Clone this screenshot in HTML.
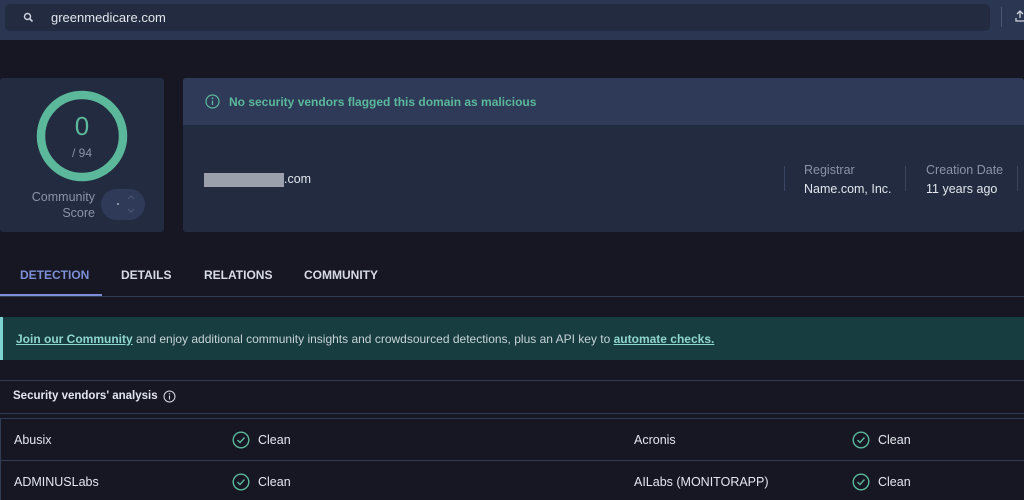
<!DOCTYPE html>
<html><head><meta charset="utf-8"><style>
*{margin:0;padding:0;box-sizing:border-box}
body{width:1024px;height:500px;overflow:hidden;background:#161723;font-family:"Liberation Sans",sans-serif;color:#e3e6ee;position:relative}
.a{position:absolute}
</style></head><body>
<div class="a" style="left:0;top:0;width:1024px;height:40px;background:#2b3652"></div>
<div class="a" style="left:5px;top:4px;width:985px;height:27px;background:#222b3f;border-radius:5px"></div>
<svg class="a" style="left:23px;top:12px" width="11" height="11" viewBox="0 0 11 11"><circle cx="4.5" cy="4.5" r="3" fill="none" stroke="#d0d4de" stroke-width="1.4"/><path d="M6.7 6.7L9.5 9.5" stroke="#d0d4de" stroke-width="1.6"/></svg>
<div class="a" style="left:51px;top:10px;font-size:13px;color:#e3e6ee">greenmedicare.com</div>
<div class="a" style="left:1001px;top:7px;width:1px;height:20px;background:#4a5570"></div>
<svg class="a" style="left:1015px;top:10px" width="10" height="12"><path d="M5 1V8M2 4L5 1L8 4M1 8V11H9" fill="none" stroke="#cfd3dd" stroke-width="1.3"/></svg>

<div class="a" style="left:0;top:78px;width:164px;height:154px;background:#222b40;border-radius:3px"></div>
<svg class="a" style="left:36px;top:90px" width="92" height="92"><circle cx="46" cy="46" r="41" fill="none" stroke="#5bb89b" stroke-width="8.5"/></svg>
<div class="a" style="left:0;top:111px;width:164px;text-align:center;font-size:26px;color:#5bb89b">0</div>
<div class="a" style="left:0;top:146px;width:164px;text-align:center;font-size:12px;color:#8a93a8">/ 94</div>
<div class="a" style="left:20px;top:189px;width:75px;text-align:right;font-size:12.5px;line-height:16px;color:#8a93a8">Community<br>Score</div>
<div class="a" style="left:101px;top:189px;width:44px;height:31px;border-radius:16px;background:#2e3a58"></div>
<div class="a" style="left:117px;top:203px;width:2px;height:2px;background:#8a93a8"></div>
<svg class="a" style="left:127px;top:193px" width="8" height="22"><path d="M1 6L4 3L7 6M1 16L4 19L7 16" fill="none" stroke="#4a5672" stroke-width="1.2"/></svg>

<div class="a" style="left:183px;top:78px;width:841px;height:154px;background:#222b40;border-radius:3px"></div>
<div class="a" style="left:183px;top:78px;width:841px;height:47px;background:#2e3a58;border-radius:3px 3px 0 0"></div>
<svg class="a" style="left:205px;top:94px" width="15" height="15"><circle cx="7.5" cy="7.5" r="6.5" fill="none" stroke="#5bb89b" stroke-width="1.2"/><path d="M7.5 6.5V11" stroke="#5bb89b" stroke-width="1.3"/><circle cx="7.5" cy="4.3" r=".9" fill="#5bb89b"/></svg>
<div class="a" style="left:229px;top:95px;font-size:12px;font-weight:bold;color:#5bb89b">No security vendors flagged this domain as malicious</div>
<div class="a" style="left:204px;top:173px;width:80px;height:14px;background:#9aa1ad"></div>
<div class="a" style="left:284px;top:172px;font-size:12.5px;color:#e3e6ee">.com</div>
<div class="a" style="left:784px;top:166px;width:1px;height:25px;background:#3a4560"></div>
<div class="a" style="left:804px;top:163px;font-size:12.5px;color:#8a93a8">Registrar</div>
<div class="a" style="left:804px;top:182px;font-size:12.5px;color:#e3e6ee">Name.com, Inc.</div>
<div class="a" style="left:905px;top:166px;width:1px;height:25px;background:#3a4560"></div>
<div class="a" style="left:926px;top:163px;font-size:12.5px;color:#8a93a8">Creation Date</div>
<div class="a" style="left:926px;top:182px;font-size:12.5px;color:#e3e6ee">11 years ago</div>
<div class="a" style="left:1017px;top:166px;width:1px;height:25px;background:#3a4560"></div>

<div class="a" style="left:20px;top:268px;font-size:12px;font-weight:bold;color:#7c8fd6">DETECTION</div>
<div class="a" style="left:121px;top:268px;font-size:12px;font-weight:bold;color:#d8dbe4">DETAILS</div>
<div class="a" style="left:204px;top:268px;font-size:12px;font-weight:bold;color:#d8dbe4">RELATIONS</div>
<div class="a" style="left:304px;top:268px;font-size:12px;font-weight:bold;color:#d8dbe4">COMMUNITY</div>
<div class="a" style="left:0;top:296px;width:1024px;height:1px;background:#333c55"></div>
<div class="a" style="left:0;top:294px;width:102px;height:2px;background:#7c8fd6"></div>

<div class="a" style="left:0;top:317px;width:1024px;height:43px;background:#183d40;border-left:3px solid #7dd3d0"></div>
<div class="a" style="left:16px;top:332px;font-size:12px;color:#c5d3d6;white-space:nowrap"><b style="color:#8fd6d0;text-decoration:underline">Join our Community</b> and enjoy additional community insights and crowdsourced detections, plus an API key to <b style="color:#8fd6d0;text-decoration:underline">automate checks.</b></div>

<div class="a" style="left:0;top:380px;width:1024px;height:1px;background:#333c55"></div>
<div class="a" style="left:13px;top:390px;font-size:11.5px;font-weight:bold;color:#e3e6ee">Security vendors' analysis</div>
<svg class="a" style="left:163px;top:390px" width="13" height="13"><circle cx="6.5" cy="6.5" r="5.5" fill="none" stroke="#d8dbe4" stroke-width="1"/><path d="M6.5 5.5V9.5" stroke="#d8dbe4" stroke-width="1.1"/><circle cx="6.5" cy="3.8" r=".7" fill="#d8dbe4"/></svg>
<div class="a" style="left:0;top:413px;width:1024px;height:1px;background:#333c55"></div>
<div class="a" style="left:0;top:418px;width:1024px;height:1px;background:#333c55"></div>
<div class="a" style="left:0;top:418px;width:1px;height:82px;background:#333c55"></div>
<div class="a" style="left:0;top:460px;width:1024px;height:1px;background:#333c55"></div>

<div class="a" style="left:14px;top:433px;font-size:12.5px">Abusix</div>
<div class="a" style="left:14px;top:475px;font-size:12.5px">ADMINUSLabs</div>
<div class="a" style="left:634px;top:433px;font-size:12.5px">Acronis</div>
<div class="a" style="left:634px;top:475px;font-size:12.5px">AILabs (MONITORAPP)</div>

<svg class="a" style="left:232px;top:431px" width="18" height="18"><circle cx="9" cy="9" r="7.8" fill="none" stroke="#5bb89b" stroke-width="1.4"/><path d="M5.5 9L8 11.5L12.5 6.5" fill="none" stroke="#5bb89b" stroke-width="1.4"/></svg>
<div class="a" style="left:258px;top:433px;font-size:12.5px">Clean</div>
<svg class="a" style="left:232px;top:473px" width="18" height="18"><circle cx="9" cy="9" r="7.8" fill="none" stroke="#5bb89b" stroke-width="1.4"/><path d="M5.5 9L8 11.5L12.5 6.5" fill="none" stroke="#5bb89b" stroke-width="1.4"/></svg>
<div class="a" style="left:258px;top:475px;font-size:12.5px">Clean</div>
<svg class="a" style="left:852px;top:431px" width="18" height="18"><circle cx="9" cy="9" r="7.8" fill="none" stroke="#5bb89b" stroke-width="1.4"/><path d="M5.5 9L8 11.5L12.5 6.5" fill="none" stroke="#5bb89b" stroke-width="1.4"/></svg>
<div class="a" style="left:878px;top:433px;font-size:12.5px">Clean</div>
<svg class="a" style="left:852px;top:473px" width="18" height="18"><circle cx="9" cy="9" r="7.8" fill="none" stroke="#5bb89b" stroke-width="1.4"/><path d="M5.5 9L8 11.5L12.5 6.5" fill="none" stroke="#5bb89b" stroke-width="1.4"/></svg>
<div class="a" style="left:878px;top:475px;font-size:12.5px">Clean</div>
</body></html>
